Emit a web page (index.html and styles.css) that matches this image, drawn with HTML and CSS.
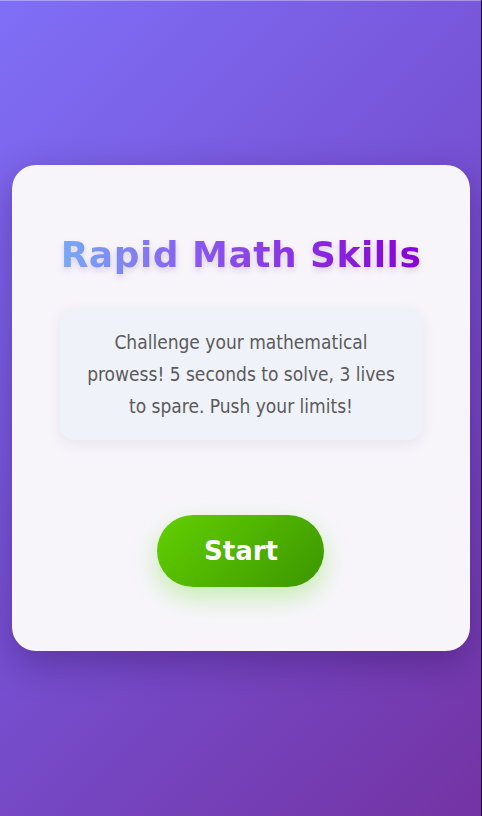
FILE: index.html
```html
<!DOCTYPE html>
<html lang="en">
<head>
<meta charset="utf-8">
<title>Rapid Math Skills</title>
<link rel="stylesheet" href="styles.css">
</head>
<body>
<main class="screen">
  <section class="card">
    <h1 class="title">Rapid Math Skills</h1>
    <div class="intro">
      <p>Challenge your mathematical prowess! 5 seconds to solve, 3 lives to spare. Push your limits!</p>
    </div>
    <button class="start" type="button">Start</button>
  </section>
</main>
</body>
</html>
```
FILE: styles.css
```css
* { box-sizing: border-box; }
html, body { margin: 0; padding: 0; height: 100%; }
body {
  font-family: "DejaVu Sans", Verdana, sans-serif;
  background: #7652c8;
}
.screen {
  min-height: 100vh;
  display: flex;
  align-items: center;
  justify-content: center;
  background: linear-gradient(135deg, #7f6ff7 0%, #7650d2 50%, #7433a3 100%);
  box-shadow: inset -1px 0 0 #1e1230, inset 0 1px 0 rgba(255,255,255,0.35);
}
.card {
  width: 95%;
  background: #f7f5fa;
  border-radius: 24px;
  padding: 68px 38px 64px;
  display: flex;
  flex-direction: column;
  align-items: center;
  box-shadow: 0 12px 36px rgba(40, 10, 80, 0.35);
}
.title {
  margin: 0 0 32px;
  font-size: 36px;
  line-height: 43px;
  font-weight: bold;
  letter-spacing: 0.5px;
  background: linear-gradient(90deg, #78aaf6 0%, #8a55ee 40%, #8800d6 100%);
  -webkit-background-clip: text;
  background-clip: text;
  color: transparent;
  filter: drop-shadow(0 3px 3px rgba(90, 40, 140, 0.18));
}
.intro {
  width: 362px;
  background: #f0f2f9;
  border-radius: 14px;
  padding: 18px 24px;
  box-shadow: 0 4px 14px rgba(60, 40, 110, 0.08);
}
.intro p {
  margin: 0;
  font-family: "DejaVu Sans Condensed", "DejaVu Sans", sans-serif;
  font-size: 19px;
  line-height: 32px;
  color: #5a5a5a;
  text-align: center;
}
.start {
  margin-top: 75px;
  width: 167px;
  height: 72px;
  border: none;
  border-radius: 36px;
  background: linear-gradient(135deg, #62d000 0%, #3c9600 100%);
  color: #fff;
  font-family: "DejaVu Sans", Verdana, sans-serif;
  font-weight: bold;
  font-size: 26px;
  box-shadow: 0 10px 24px rgba(110, 220, 40, 0.35);
  cursor: pointer;
}
```
